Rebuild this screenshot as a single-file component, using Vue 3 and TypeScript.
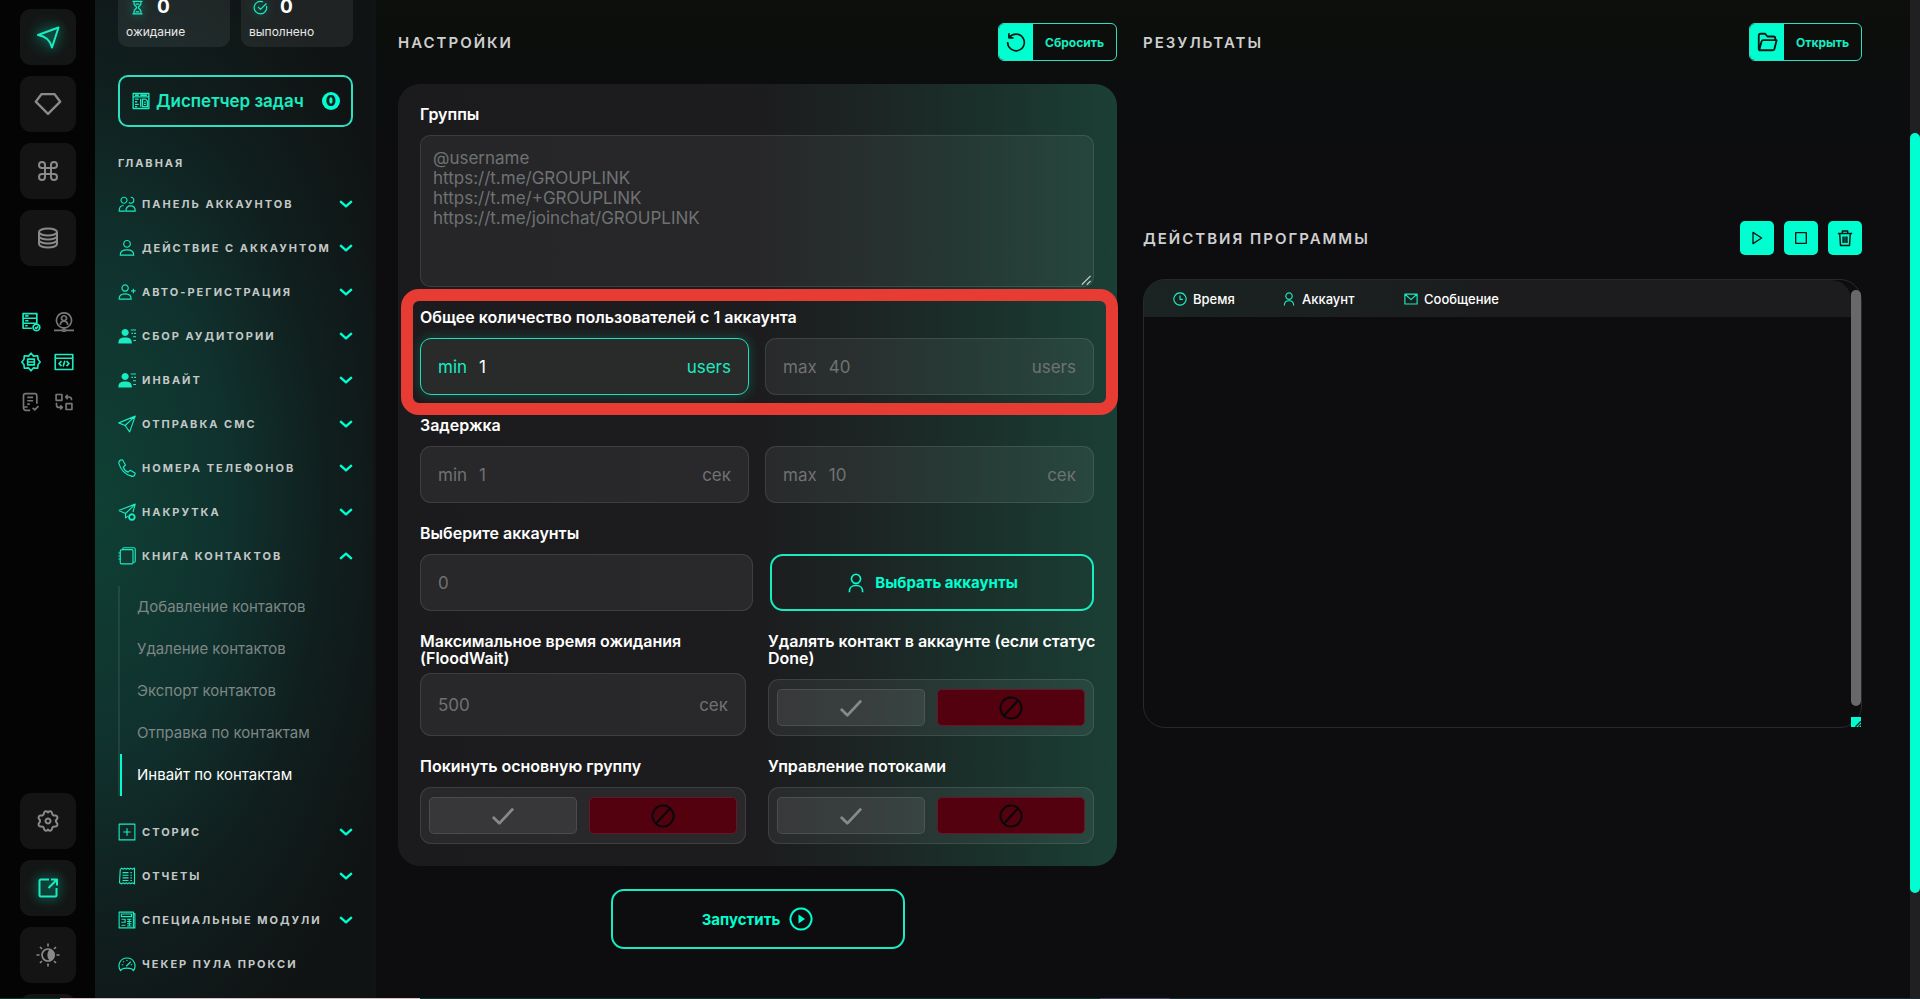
<script setup lang="ts">
import { h, ref, type FunctionalComponent } from 'vue'

interface Shape { d: string; fill?: boolean; w?: number }

const icons: Record<string, Shape[]> = {
  plane: [{ d: 'M2 10 22.500 2.500 16 22.500C14.500 16 11 11.500 2 10Z' }],
  gem: [{ d: 'M6.500 3.500h11L22.500 10 12 20.500 1.500 10Z' }],
  command: [{ d: 'M9 9V6a3 3 0 1 0-3 3zM15 9h3a3 3 0 1 0-3-3zM15 15v3a3 3 0 1 0 3-3zM9 15H6a3 3 0 1 0 3 3zM9 9h6v6H9z' }],
  database: [{ d: 'M3 6a9 3.500 0 0 1 18 0a9 3.500 0 0 1-18 0v12a9 3.500 0 0 0 18 0V6M3 10a9 3.500 0 0 0 18 0M3 14a9 3.500 0 0 0 18 0' }],
  gear: [{ d: 'M12 3.500c1-2 3.700-1.300 4 .6.3 2 1.600 2.700 3.200 2.400 2.200-.2 3 2.300 1.500 3.800-1 1-1 2.400 0 3.400 1.500 1.500.7 4-1.500 3.800-1.600-.3-2.900.4-3.200 2.400-.3 1.900-3 2.600-4 .6-1 2-3.700 1.300-4-.6-.3-2-1.600-2.700-3.200-2.400-2.200.2-3-2.300-1.500-3.800 1-1 1-2.400 0-3.400-1.500-1.500-.7-4 1.500-3.800 1.600.3 2.900-.4 3.200-2.400.3-1.900 3-2.600 4-.6Z' }, { d: 'M12 9.500a2.500 2.500 0 1 0 .01 0Z' }],
  external: [{ d: 'M13 3.500H5A1.500 1.500 0 0 0 3.500 5v14A1.500 1.500 0 0 0 5 20.500h14a1.500 1.500 0 0 0 1.500-1.500v-7M15 3.500h6v6M21 3.500 12.500 12' }],
  sun: [{ d: 'M12 6a6 6 0 1 0 .01 0ZM12 .5v3M12 20.500v3M.5 12h3M20.500 12h3M4 4l2 2M18 18l2 2M4 20l2-2M18 6l2-2', w: 1.6 }, { d: 'M13.500 6.500a5.500 5.500 0 0 1 0 11 8 8 0 0 1 0-11Z', fill: true }],
  server: [{ d: 'M2.500 2h16.500v5.500H2.500zM2.500 7.500h16.500v6H2.500zM13 19.500H2.500v-6h12M5 4.700h4M5 10.500h4M5 16.500h3M18.500 14.500a4 4 0 1 0 .01 0ZM16.800 18.500l1.400 1.400 2.300-2.600' }],
  proxy: [{ d: 'M12 1a9 9 0 1 0 .01 0ZM12 4.500a3 3 0 1 0 .01 0ZM7.500 15.500c.5-6 8.500-6 9 0M12 19v2M0 22h10M14 22h10M12 20.500a1.500 1.500 0 1 0 .01 0Z' }],
  gearServer: [{ d: 'M12 1.500 15 5l5-.5.500 4.500 2.500 3-2.500 3-.5 4.500-5-.5-3 3.500-3-3.500-5 .5-.5-4.500L1 12l2.500-3L4 4.500 9 5ZM8 8.500h8v3.500H8zM8 12h8v3.500H8z', w: 2 }],
  code: [{ d: 'M1.500 3h21v18h-21zM1.500 7.500h21M9 11l-3 3 3 3M15 11l3 3-3 3M13 10.500l-2 7', w: 2 }],
  checklist: [{ d: 'M11 22H5.500A3 3 0 0 1 3 19V4.500C3 3 4 2 5.500 2h11C18 2 19 3 19 4.500V14M7.500 6.500h7M7.500 10.500h7M7.500 14.500h3M3 18h5M14 19l2.500 2.500L21 17' }],
  swap: [{ d: 'M2.500 3h7v7h-7zM14.500 14h7v7h-7zM14 6h4a3 3 0 0 1 3 3v1M16.500 3.500 14 6l2.500 2.500M3 13v2.500a3 3 0 0 0 3 3h4M7.500 16l2.500 2.500L7.500 21' }],
  hourglass: [{ d: 'M4 2h16M4 22h16M6.500 2v4c0 3 4 4 4 6s-4 3-4 6v4M17.500 2v4c0 3-4 4-4 6s4 3 4 6v4M9 6.500h6M9 19h6' }],
  done: [{ d: 'M21.500 9.500A10 10 0 1 1 16 3M8 11l4 4 9.500-9.500' }],
  dashboard: [{ d: 'M1.500 2h21v20h-21zM1.500 6.500h21M4 4.300h5M11 4.300h9M4 9.500h5M4 13h3M4 16.500h5M4 19.500h3M11.500 9v10.500M14 9.500h4l2.500 2.500v7.500H14zM16 13.500h2.500M16 16.500h2.500' }],
  users: [{ d: 'M8 3a4 4 0 1 0 .01 0ZM17 3a4 4 0 1 1-2.500 7M9.500 21.500H1.500c0-6 3-7.500 6-7.500M10.500 21.500c0-4.500 2.500-7 6.500-7s6 2.500 6 7Z' }],
  user: [{ d: 'M12 2a4.500 4.500 0 1 0 .01 0ZM3 21.500c-.2-4.500 2.500-7 9-7s9.200 2.500 9 7Z' }],
  userAdd: [{ d: 'M9.500 2.500a4.200 4.200 0 1 0 .01 0ZM1.500 21.500c-.2-4.500 2.300-7 8-7s8.200 2.500 8 7ZM17.500 10.500h6M20.500 7.500v6' }],
  userList: [{ d: 'M9.500 2.500a4.800 4.800 0 1 0 .01 0ZM.5 22c-.2-6 3-8 9-8s9.200 2 9 8Z', fill: true }, { d: 'M17 4h7M18 8.500h2M21.500 8.500H24M20 13h4M20.500 18H24' }],
  send: [{ d: 'M1 10.500 23 1.500 15.500 22.500 9.500 14ZM9.500 14 23 1.500M1 10.500l8.500 3.500' }],
  phone: [{ d: 'M3.500 1.500 6 1l4 7-3 3c1 3 3.500 5.500 6.500 6.500l3-2.500 6.500 4-1 3c-1 1-3 1.500-5 .5C9 20 3.500 13.500 1.300 6.500.8 4.500 1.500 2.500 3.500 1.500Z' }],
  sendBoost: [{ d: 'M1 10 23 1.500 20 12M1 10l9 4L23 1.500M10 14v6l3-2.500' }, { d: 'M18.500 15a3.700 3.700 0 1 0 .01 0Z', w: 2.5 }],
  book: [{ d: 'M5.500 3.500h13A1.500 1.500 0 0 1 20 5v16a1.500 1.500 0 0 1-1.500 1.500H4.500A1.500 1.500 0 0 1 3 21V6c0-1.500 1-2.500 2.500-2.500ZM6 3c0-1 1-2 2-2h13a2 2 0 0 1 2 2v16c0 1-1 1.500-3 1.500M.5 8H4M.5 12H4M.5 16H4' }],
  plusBox: [{ d: 'M1.500 1.500h21v21h-21zM12 7v10M7 12h10' }],
  receipt: [{ d: 'M3 3.500 5 1.500l2 1.500 2-1.500 2 1.500 2-1.500 2 1.500 2-1.500L19 3l3-1.500v21L19 21l-2 1.500-2-1.500-2 1.500L11 21l-2 1.500L7 21l-2 1.500L2 21ZM6 7.500h8M6 11h8M6 14.500h8M6 18h8M16.500 7.500h2M16.500 11h2M16.500 14.500h2M16.500 18h2' }],
  news: [{ d: 'M1.500 1.500h19v21h-19zM20.500 3.500h2v19h-19M4.500 4h13.500v3.500H4.500zM4.500 11h5v4h-5M12 11h6M12 14h6M4.500 19h5.500M12 17h6M12 20h6M15 11v9' }],
  gauge: [{ d: 'M3.500 21C-1.500 14 2.500 4 12 4s13.500 10 8.500 17c-1-3-4.500-3.500-8.500-3.500S4.500 18 3.500 21ZM11 15l6-6M5 13h2M17 13h2M12 6.500V8M7 8.500l1 1' }],
  reset: [{ d: 'M4 6.500A10 10 0 1 1 2 12M3.500 1.500v5.500H9' }],
  folder: [{ d: 'M4.500 21 3 20V5.500C3 4 4 3 5 3h5l2.500 3H19c1 0 2 1 2 2v2M3.500 21 6 11.500c.3-1 1-1.500 2-1.500h14.500l-2.500 10c-.3.7-1 1-2 1Z' }],
  play: [{ d: 'M6 3.500 19 12 6 20.500Z' }],
  stop: [{ d: 'M4 4h16v16H4z' }],
  trash: [{ d: 'M5 6.500 6 22h12l1-15.500M2.500 6h19M8.500 6V2.500h7V6M9.500 10v8.500M12 10v8.500M14.500 10v8.500' }],
  clock: [{ d: 'M12 1.500a10.500 10.500 0 1 0 .01 0ZM12 6v6.500h5' }],
  person: [{ d: 'M12 1.500a5.500 5.500 0 1 0 .01 0ZM4 23c0-6 2-8 8-8s8 2 8 8' }],
  mail: [{ d: 'M1.500 3.500h21v17h-21zM1.500 3.500 12 13 22.500 3.500' }],
  check: [{ d: 'M1 13l7 7L23 4' }],
  ban: [{ d: 'M12 1.500a10.500 10.500 0 1 0 .01 0ZM5 19.500 19 4.500' }],
  playCircle: [{ d: 'M12 1.500a10.500 10.500 0 1 0 .01 0Z' }, { d: 'M9.500 7.500 16 12l-6.500 4.500Z', fill: true }],
  down: [{ d: 'M2 7l10 9 10-9' }],
  up: [{ d: 'M2 17l10-9 10 9' }],
  grip: [{ d: 'M2 23 23 2M14 23l9-9' }],
}

const Icon: FunctionalComponent<{ name: string; size?: number; weight?: number }> = (p) =>
  h('svg', { width: p.size ?? 18, height: p.size ?? 18, viewBox: '0 0 24 24', fill: 'none', 'aria-hidden': 'true' },
    icons[p.name].map((s) => h('path', {
      d: s.d,
      fill: s.fill ? 'currentColor' : 'none',
      stroke: s.fill ? 'none' : 'currentColor',
      'stroke-width': s.w ?? p.weight ?? 1.5,
      'stroke-linejoin': 'round',
    })))
Icon.props = ['name', 'size', 'weight']

const railTop = [
  { icon: 'plane', label: 'Telegram', on: true },
  { icon: 'gem', label: 'Premium' },
  { icon: 'command', label: 'Команды' },
  { icon: 'database', label: 'База' },
]
const railBottom = [
  { icon: 'gear', label: 'Параметры' },
  { icon: 'external', label: 'Открыть в окне', on: true },
  { icon: 'sun', label: 'Тема' },
]
const minis = [
  { icon: 'server', label: 'Серверы', on: true },
  { icon: 'proxy', label: 'Прокси' },
  { icon: 'gearServer', label: 'Настройки сервера', on: true },
  { icon: 'code', label: 'Код', on: true },
  { icon: 'checklist', label: 'Журнал' },
  { icon: 'swap', label: 'Обмен' },
]
const counters = [
  { icon: 'hourglass', value: 0, label: 'ожидание' },
  { icon: 'done', value: 0, label: 'выполнено' },
]
const menu = [
  { icon: 'users', text: 'ПАНЕЛЬ АККАУНТОВ' },
  { icon: 'user', text: 'ДЕЙСТВИЕ С АККАУНТОМ' },
  { icon: 'userAdd', text: 'АВТО-РЕГИСТРАЦИЯ' },
  { icon: 'userList', text: 'СБОР АУДИТОРИИ' },
  { icon: 'userList', text: 'ИНВАЙТ' },
  { icon: 'send', text: 'ОТПРАВКА СМС' },
  { icon: 'phone', text: 'НОМЕРА ТЕЛЕФОНОВ' },
  { icon: 'sendBoost', text: 'НАКРУТКА' },
  {
    icon: 'book', text: 'КНИГА КОНТАКТОВ',
    children: ['Добавление контактов', 'Удаление контактов', 'Экспорт контактов', 'Отправка по контактам', 'Инвайт по контактам'],
  },
  { icon: 'plusBox', text: 'СТОРИС' },
  { icon: 'receipt', text: 'ОТЧЕТЫ' },
  { icon: 'news', text: 'СПЕЦИАЛЬНЫЕ МОДУЛИ' },
  { icon: 'gauge', text: 'ЧЕКЕР ПУЛА ПРОКСИ', leaf: true },
]
const activeChild = ref('Инвайт по контактам')

const groups = ref('')
const groupsHint = '@username\nhttps://t.me/GROUPLINK\nhttps://t.me/+GROUPLINK\nhttps://t.me/joinchat/GROUPLINK'
const usersMin = ref('1')
const usersMax = ref('')
const delayMin = ref('')
const delayMax = ref('')
const accounts = ref('')
const floodWait = ref('')
const removeContact = ref(false)
const leaveGroup = ref(false)
const threads = ref(false)
</script>

<template>
  <div class="app">
    <aside class="rail">
      <div class="rail-group">
        <button v-for="b in railTop" :key="b.icon" type="button" class="rail-btn" :class="{ on: b.on }" :aria-label="b.label">
          <Icon :name="b.icon" :size="b.icon === 'gem' ? 28 : 24" :weight="2" />
        </button>
      </div>
      <div class="minis">
        <button v-for="m in minis" :key="m.icon" type="button" class="mini" :class="{ on: m.on }" :aria-label="m.label">
          <Icon :name="m.icon" :size="20" :weight="2" />
        </button>
      </div>
      <div class="rail-group rail-bottom">
        <button v-for="b in railBottom" :key="b.icon" type="button" class="rail-btn" :class="{ on: b.on }" :aria-label="b.label">
          <Icon :name="b.icon" :size="24" :weight="2" />
        </button>
        <button type="button" class="rail-btn" aria-label="Ещё"></button>
      </div>
    </aside>

    <nav class="side">
      <div class="counters">
        <div v-for="c in counters" :key="c.label" class="counter">
          <div class="counter-top"><Icon class="glow" :name="c.icon" :size="15" :weight="2" /><b>{{ c.value }}</b></div>
          <span>{{ c.label }}</span>
        </div>
      </div>
      <button type="button" class="tasks">
        <Icon name="dashboard" :size="18" :weight="1.800" />
        <span>Диспетчер задач</span>
        <b class="badge">0</b>
      </button>
      <h2 class="side-title">ГЛАВНАЯ</h2>
      <ul class="menu">
        <li v-for="m in menu" :key="m.text">
          <button type="button" class="menu-item">
            <Icon :name="m.icon" :size="18" />
            <span>{{ m.text }}</span>
            <Icon v-if="!m.leaf" class="chev" :name="m.children ? 'up' : 'down'" :size="14" :weight="4" />
          </button>
          <ul v-if="m.children" class="sub">
            <li v-for="c in m.children" :key="c">
              <a href="#" :class="{ active: c === activeChild }" @click.prevent="activeChild = c">{{ c }}</a>
            </li>
          </ul>
        </li>
      </ul>
    </nav>

    <main class="main">
      <section>
        <header class="head">
          <h1>НАСТРОЙКИ</h1>
          <button type="button" class="tag-btn"><i><Icon name="reset" :size="20" :weight="2" /></i><span>Сбросить</span></button>
        </header>
        <form class="card" @submit.prevent>
          <div class="group">
            <label class="title" for="groups">Группы</label>
            <div class="area">
              <textarea id="groups" v-model="groups" :placeholder="groupsHint"></textarea>
              <Icon class="grip" name="grip" :size="10" :weight="3" />
            </div>
          </div>
          <div class="group marked" role="group" aria-labelledby="t-users">
            <span id="t-users" class="title">Общее количество пользователей с 1 аккаунта</span>
            <div class="pair">
              <label class="field focus"><span>min</span><input v-model="usersMin" type="text"><span>users</span></label>
              <label class="field"><span>max</span><input v-model="usersMax" type="text" placeholder="40"><span>users</span></label>
            </div>
          </div>
          <div class="group" role="group" aria-labelledby="t-delay">
            <span id="t-delay" class="title">Задержка</span>
            <div class="pair">
              <label class="field"><span>min</span><input v-model="delayMin" type="text" placeholder="1"><span>сек</span></label>
              <label class="field"><span>max</span><input v-model="delayMax" type="text" placeholder="10"><span>сек</span></label>
            </div>
          </div>
          <div class="group">
            <label class="title" for="accounts">Выберите аккаунты</label>
            <div class="pair pick">
              <div class="field"><input id="accounts" v-model="accounts" type="text" placeholder="0"></div>
              <button type="button" class="outline"><Icon name="person" :size="20" :weight="2" />Выбрать аккаунты</button>
            </div>
          </div>
          <div class="halves">
            <div class="group tight">
              <label class="title" for="flood">Максимальное время ожидания<br>(FloodWait)</label>
              <div class="field tall"><input id="flood" v-model="floodWait" type="text" placeholder="500"><span>сек</span></div>
            </div>
            <div class="group" role="group" aria-labelledby="t-remove">
              <span id="t-remove" class="title">Удалять контакт в аккаунте (если статус<br>Done)</span>
              <div class="toggle">
                <button type="button" aria-label="Да" @click="removeContact = true"><Icon name="check" :size="22" :weight="3" /></button>
                <button type="button" aria-label="Нет" :class="{ no: !removeContact }" @click="removeContact = false"><Icon name="ban" :size="24" :weight="2" /></button>
              </div>
            </div>
          </div>
          <div class="halves">
            <div class="group" role="group" aria-labelledby="t-leave">
              <span id="t-leave" class="title">Покинуть основную группу</span>
              <div class="toggle">
                <button type="button" aria-label="Да" @click="leaveGroup = true"><Icon name="check" :size="22" :weight="3" /></button>
                <button type="button" aria-label="Нет" :class="{ no: !leaveGroup }" @click="leaveGroup = false"><Icon name="ban" :size="24" :weight="2" /></button>
              </div>
            </div>
            <div class="group" role="group" aria-labelledby="t-threads">
              <span id="t-threads" class="title">Управление потоками</span>
              <div class="toggle">
                <button type="button" aria-label="Да" @click="threads = true"><Icon name="check" :size="22" :weight="3" /></button>
                <button type="button" aria-label="Нет" :class="{ no: !threads }" @click="threads = false"><Icon name="ban" :size="24" :weight="2" /></button>
              </div>
            </div>
          </div>
        </form>
        <button type="button" class="outline start">Запустить<Icon name="playCircle" :size="24" :weight="2" /></button>
      </section>

      <section>
        <header class="head">
          <h1>РЕЗУЛЬТАТЫ</h1>
          <button type="button" class="tag-btn"><i><Icon name="folder" :size="22" :weight="2" /></i><span>Открыть</span></button>
        </header>
        <div class="results"></div>
        <header class="head log-head">
          <h1>ДЕЙСТВИЯ ПРОГРАММЫ</h1>
          <div class="tools">
            <button type="button" aria-label="Пуск"><Icon name="play" :size="16" :weight="2" /></button>
            <button type="button" aria-label="Стоп"><Icon name="stop" :size="16" :weight="2" /></button>
            <button type="button" aria-label="Очистить"><Icon name="trash" :size="18" :weight="2" /></button>
          </div>
        </header>
        <div class="log">
          <table>
            <thead>
              <tr>
                <th><span><Icon name="clock" :size="14" :weight="2" />Время</span></th>
                <th><span><Icon name="person" :size="14" :weight="2" />Аккаунт</span></th>
                <th><span><Icon name="mail" :size="14" :weight="2" />Сообщение</span></th>
              </tr>
            </thead>
            <tbody></tbody>
          </table>
          <div class="log-bar"><div class="log-thumb"></div><div class="log-corner"><Icon name="grip" :size="6" :weight="5" /></div></div>
        </div>
      </section>
    </main>

    <div class="page-bar"><div class="page-thumb"></div></div>
    <div class="strip"></div>
  </div>
</template>

<style>
html, body { background: #0d0d0f; }
</style>

<style scoped>
.app {
  --accent: #00ffd0;
  --mint: #18ecc0;
  --line: rgba(255, 255, 255, 0.1);
  position: relative;
  display: flex;
  height: 100vh;
  overflow: hidden;
  background: linear-gradient(#0c0f0b, #0c0d0e 90px, #0d0d0f 200px);
  color: #fff;
  font-family: Inter, "Open Sans", sans-serif;
}
.app * { box-sizing: border-box; }
button { font: inherit; color: inherit; background: none; border: 0; padding: 0; cursor: pointer; }
h1, h2, ul { margin: 0; padding: 0; }
ul { list-style: none; }
svg { flex: none; display: block; }

.rail { width: 95px; flex: none; background: #040405; padding-top: 9px; display: flex; flex-direction: column; }
.rail-group { display: flex; flex-direction: column; gap: 11px; padding-left: 20px; }
.rail-btn { width: 56px; height: 56px; flex: none; border-radius: 11px; background: #141415; color: #8a8a8a; display: grid; place-items: center; }
.rail-btn.on { color: var(--mint); background: radial-gradient(circle, #11302a, #141515 60%); }
.rail-btn.on svg, .glow { filter: drop-shadow(0 0 5px rgba(0, 255, 208, 0.5)); }
.minis { display: grid; grid-template-columns: 20px 20px; gap: 20px 13px; padding: 46px 0 0 21px; }
.mini { color: #77777a; height: 20px; }
.mini.on { color: var(--mint); }
.rail-bottom { margin-top: auto; margin-bottom: -51px; }

.side {
  width: 281px; flex: none; padding: 0 20px 0 23px; overflow: hidden;
  border-right: 3px solid #111314;
  background: radial-gradient(ellipse 330px 600px at 0 50%, #0f4034, #10322e 40%, #101f1e 70%, #101314 100%);
}
.counters { display: grid; grid-template-columns: 1fr 1fr; gap: 11px; margin-top: -20px; }
.counter { height: 67px; border-radius: 10px; background: rgba(255, 255, 255, 0.07); padding: 15px 8px 0; }
.counter-top { display: flex; align-items: center; gap: 12px; height: 24px; padding-left: 4px; color: var(--mint); font-size: 19px; line-height: 20px; }
.counter-top b { color: #fff; }
.counter > span { display: block; font-size: 12px; line-height: 26px; color: #e8e8e8; }
.tasks {
  display: flex; align-items: center; gap: 6px; width: 100%; height: 52px; margin-top: 28px; padding: 0 11px 0 12px;
  border: 2px solid #2fe0c0; border-radius: 10px; color: var(--mint); font-size: 17px; font-weight: 600; white-space: nowrap;
}
.badge { margin-left: auto; width: 18px; height: 18px; border-radius: 50%; background: var(--accent); color: #10201d; font-size: 14px; line-height: 18px; text-align: center; }
.side-title { font-size: 11px; line-height: 16px; letter-spacing: 2px; color: #c5c9c8; margin-top: 28px; }
.menu { padding-top: 11px; }
.menu-item { display: flex; align-items: center; gap: 6px; width: 100%; height: 44px; color: var(--mint); text-align: left; }
.menu-item span { font-size: 11px; font-weight: 700; letter-spacing: 2px; color: #c3c8c7; white-space: nowrap; }
.chev { margin-left: auto; color: var(--accent); }
.sub { margin: 8px 0 14px; border-left: 2px solid rgba(255, 255, 255, 0.08); }
.sub a { display: block; height: 42px; line-height: 42px; padding-left: 17px; font-size: 15px; color: #7d8785; text-decoration: none; white-space: nowrap; }
.sub a.active { color: #fff; border-left: 2px solid var(--accent); padding-left: 15px; }

.main { flex: 1; min-width: 0; display: grid; grid-template-columns: 1fr 1fr; gap: 26px; padding: 23px 48px 0 22px; align-items: start; }
.head { display: flex; align-items: center; justify-content: space-between; height: 38px; margin-bottom: 23px; }
h1 { font-size: 15px; font-weight: 600; letter-spacing: 2px; color: #cfcfcf; }
.tag-btn { display: flex; height: 38px; border: 1px solid #2fe0c0; border-radius: 6px; overflow: hidden; color: var(--mint); font-size: 12px; font-weight: 700; }
.tag-btn i { width: 34px; display: grid; place-items: center; background: var(--accent); color: #0b1512; }
.tag-btn span { align-self: center; padding: 0 12px; }

.card {
  display: flex; flex-direction: column; gap: 22px; padding: 22px 23px 22px 22px; border-radius: 22px;
  background: linear-gradient(90deg, #1b1b1d, #1c1c1e 50%, #1c2423 64%, #1a312b 82%, #1b3f35);
}
.group { display: flex; flex-direction: column; gap: 12px; justify-content: flex-end; }
.group.tight { gap: 6px; }
.title { font-size: 16px; font-weight: 600; line-height: 17px; white-space: nowrap; }
.area { position: relative; display: flex; }
textarea {
  width: 100%; height: 152px; resize: none; border: 1px solid var(--line); border-radius: 10px; outline: 0;
  background: rgba(255, 255, 255, 0.05); color: #fff; padding: 12px 12px; font: 17px/20px Inter, "Open Sans", sans-serif;
}
::placeholder { color: #6f7272; opacity: 1; }
.grip { position: absolute; right: 3px; bottom: 2px; color: #cfd6d4; }
.pair { display: grid; grid-template-columns: 1fr 1fr; gap: 16px; }
.pick { grid-template-columns: 1fr 324px; gap: 17px; }
.halves { display: grid; grid-template-columns: minmax(0, 1fr) minmax(0, 1fr); gap: 22px; }
.field {
  display: flex; align-items: center; gap: 12px; height: 57px; padding: 0 17px; border: 1px solid var(--line); border-radius: 11px;
  background: rgba(255, 255, 255, 0.06); color: #6f7272; font-size: 17px;
}
.field.tall { height: 63px; }
.field input { flex: 1; min-width: 0; width: 0; height: 100%; padding: 0; border: 0; outline: 0; background: none; color: #fff; font: inherit; }
.field.focus { border-color: #20dcb8; color: var(--mint); background: #292a2a; box-shadow: 0 0 12px rgba(0, 255, 208, 0.22); }
.marked { position: relative; }
.marked::after { content: ""; position: absolute; inset: -20px -24px -20px -19px; border: 12px solid #e63c34; border-radius: 18px; pointer-events: none; }
.outline { display: flex; align-items: center; justify-content: center; gap: 9px; border: 2px solid var(--mint); border-radius: 13px; color: var(--accent); font-size: 15px; font-weight: 700; }
.start { width: 294px; height: 60px; margin: 23px auto 0; }
.toggle { display: grid; grid-template-columns: 1fr 1fr; gap: 12px; height: 57px; padding: 9px 8px; border: 1px solid var(--line); border-radius: 11px; background: rgba(255, 255, 255, 0.06); }
.toggle button { display: grid; place-items: center; border: 1px solid var(--line); border-radius: 5px; background: rgba(255, 255, 255, 0.07); color: #868a89; }
.toggle .no { background: #53000f; border-color: #66182a; color: #08080a; }

.results { height: 137px; }
.log-head { height: 34px; margin-bottom: 24px; }
.tools { display: flex; gap: 10px; }
.tools button { width: 34px; height: 34px; border-radius: 5px; background: var(--accent); color: #0b1512; display: grid; place-items: center; }
.log { display: flex; height: 449px; border: 1px solid #29292b; border-radius: 22px; }
table { flex: 1; align-self: flex-start; border-collapse: collapse; table-layout: fixed; background: linear-gradient(90deg, #1a2422, #1c1c1e 50%); border-radius: 20px 20px 0 0; }
th { height: 37px; padding: 0; text-align: left; font-size: 13px; font-weight: 500; }
th:nth-child(1) { width: 138px; padding-left: 29px; }
th:nth-child(2) { width: 122px; }
th span { display: flex; align-items: center; gap: 6px; }
th svg { color: var(--mint); }
.log-bar { width: 10px; display: flex; flex-direction: column; padding-top: 10px; }
.log-thumb { flex: 1; border-radius: 5px; background: #69676a; }
.log-corner { height: 10px; margin-top: 11px; background: var(--accent); color: #10201d; display: grid; place-items: end; }

.page-bar { width: 10px; flex: none; background: #202022; padding-top: 133px; }
.page-thumb { height: 760px; border-radius: 5px; background: var(--accent); }
.strip { position: absolute; left: 0; right: 0; bottom: 0; height: 1px; background: linear-gradient(90deg, #12352d 60px, #cfc4c8 60px 420px, #14312c 420px 1100px, #47465a 1100px 1170px, #1c2c30 1170px); }
</style>
